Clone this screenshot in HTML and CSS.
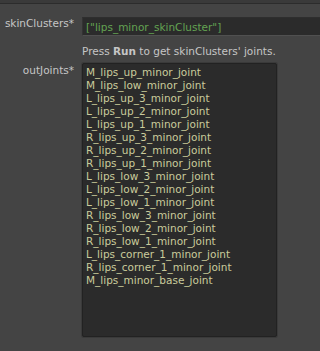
FILE: index.html
```html
<!DOCTYPE html>
<html>
<head>
<meta charset="utf-8">
<link rel="stylesheet" href="styles.css">
</head>
<body>
<div class="topbar"></div>
<div class="form">
  <div class="label lbl-sc">skinClusters*</div>
  <div class="field">["lips_minor_skinCluster"]</div>
  <div></div>
  <div class="help">Press <b>Run</b> to get skinClusters' joints.</div>
  <div class="label lbl-oj">outJoints*</div>
  <div class="list">
    <div>M_lips_up_minor_joint</div>
    <div>M_lips_low_minor_joint</div>
    <div>L_lips_up_3_minor_joint</div>
    <div>L_lips_up_2_minor_joint</div>
    <div>L_lips_up_1_minor_joint</div>
    <div>R_lips_up_3_minor_joint</div>
    <div>R_lips_up_2_minor_joint</div>
    <div>R_lips_up_1_minor_joint</div>
    <div>L_lips_low_3_minor_joint</div>
    <div>L_lips_low_2_minor_joint</div>
    <div>L_lips_low_1_minor_joint</div>
    <div>R_lips_low_3_minor_joint</div>
    <div>R_lips_low_2_minor_joint</div>
    <div>R_lips_low_1_minor_joint</div>
    <div>L_lips_corner_1_minor_joint</div>
    <div>R_lips_corner_1_minor_joint</div>
    <div>M_lips_minor_base_joint</div>
  </div>
</div>
</body>
</html>
```
FILE: styles.css
```css
html, body {
  margin: 0;
  padding: 0;
  background: #444444;
  height: 351px;
  overflow: hidden;
  font-family: "DejaVu Sans", sans-serif;
  font-size: 10.5px;
}
.topbar {
  height: 3px;
  background: #3a3a3a;
  border-bottom: 1px solid #2c2c2c;
}
.form {
  display: grid;
  grid-template-columns: 74px 1fr;
  column-gap: 8px;
  padding-top: 13px;
}
.label {
  text-align: right;
  color: #c6c6c6;
  line-height: 13px;
}
.lbl-sc {
  padding-top: 0;
}
.lbl-oj {
  padding-top: 1px;
}
.field {
  height: 17px;
  background: #2b2b2b;
  border-top: 1px solid #2e2e2e;
  border-bottom: 1px solid #505050;
  border-left: 1px solid #333333;
  color: #63a352;
  line-height: 18px;
  padding-left: 3px;
  white-space: nowrap;
  overflow: hidden;
}
.help {
  color: #c6c6c6;
  margin-top: 9px;
  line-height: 13px;
  height: 18px;
}
.help b {
  font-weight: bold;
}
.list {
  width: 187px;
  height: 268px;
  background: #2b2b2b;
  border: 1px solid #222222;
  border-radius: 2px;
  box-shadow: 0 0 0 1px #3a3a3a;
  color: #cacb9c;
  line-height: 13px;
  padding: 2px 3px;
  white-space: nowrap;
  overflow: hidden;
}
```
